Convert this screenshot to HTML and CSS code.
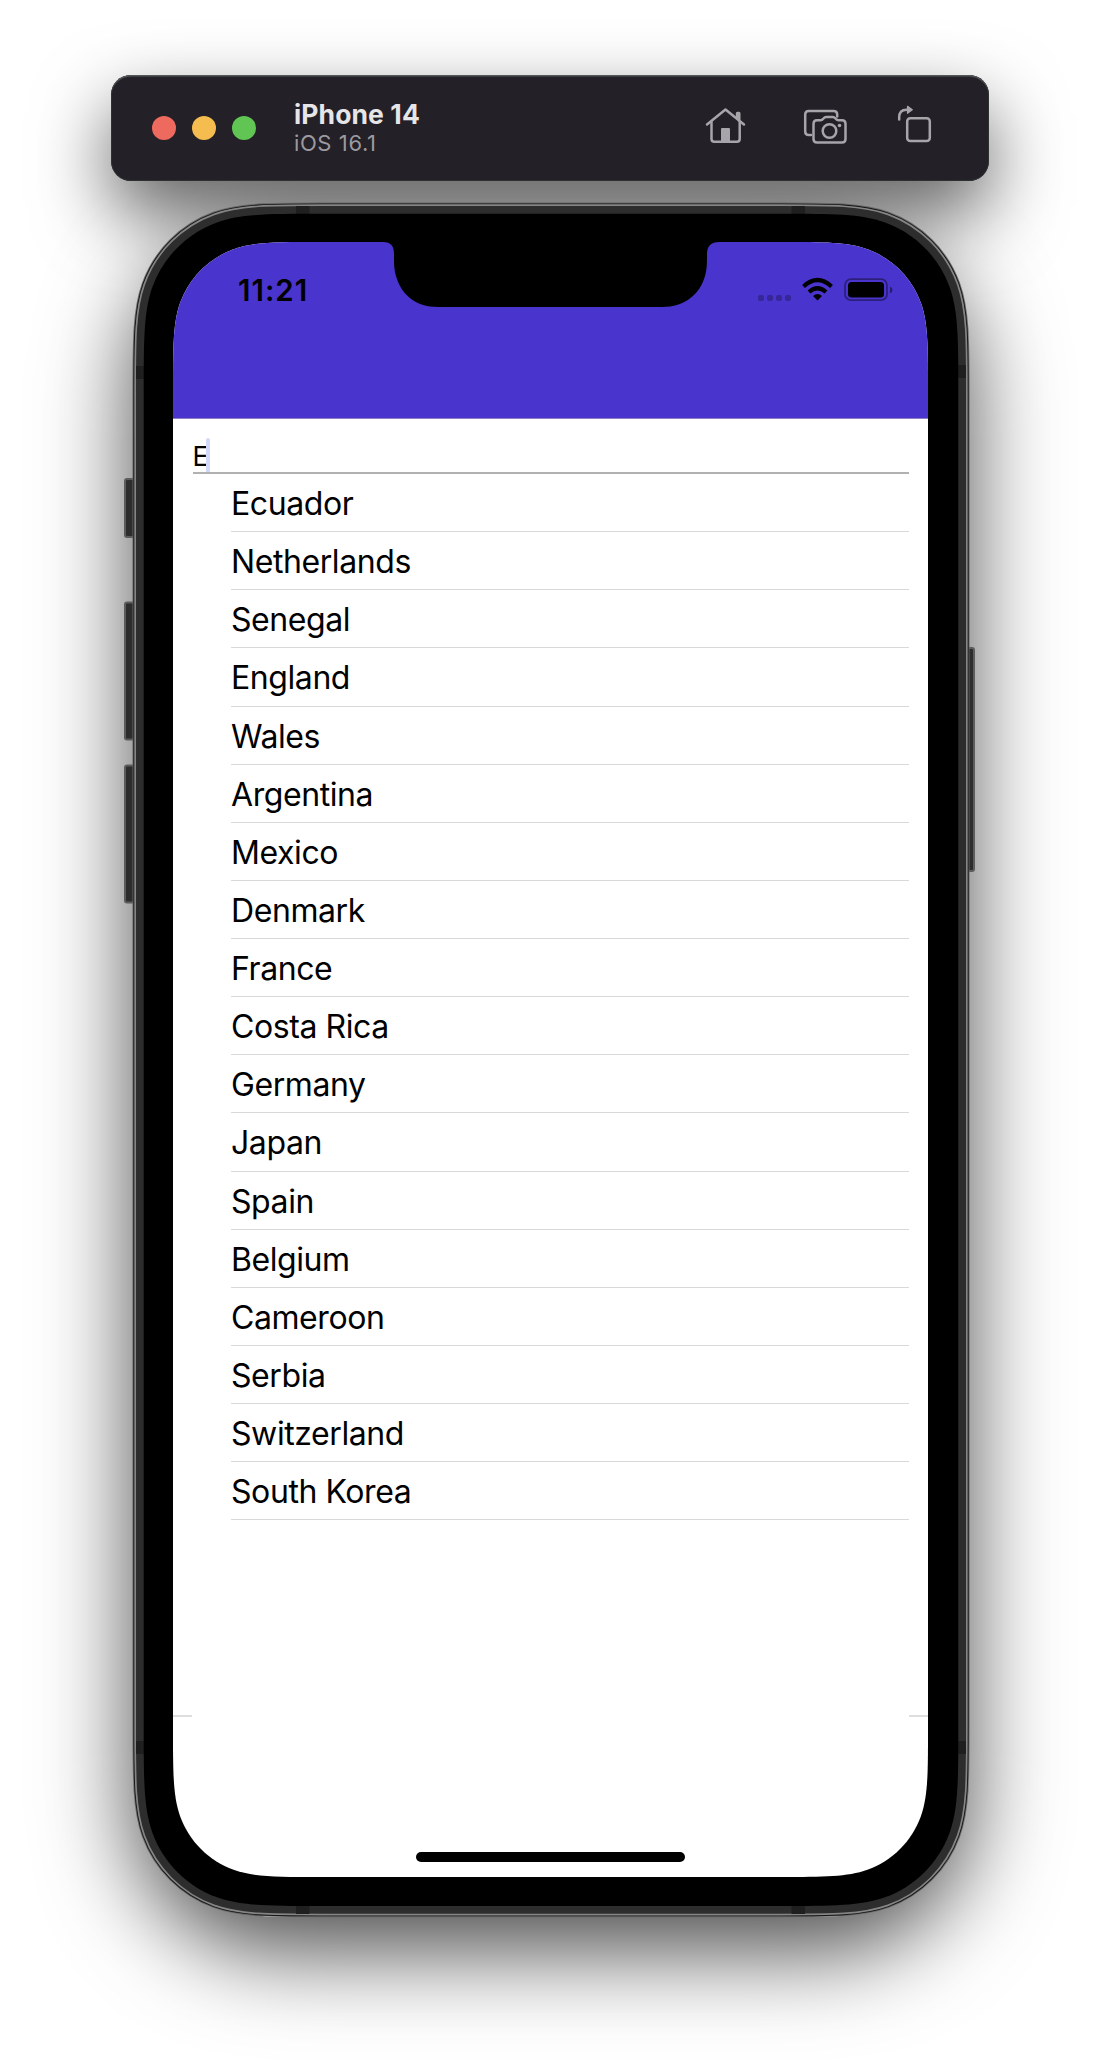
FILE: index.html
```html
<!DOCTYPE html>
<html lang="en">
<head>
<meta charset="utf-8">
<title>iPhone 14</title>
<link rel="stylesheet" href="styles.css">
</head>
<body>
<header class="toolbar">
  <div class="lights"><i class="red"></i><i class="yellow"></i><i class="green"></i></div>
  <div class="device">
    <h1>iPhone 14</h1>
    <p>iOS 16.1</p>
  </div>
  <svg class="tools" width="230" height="44" viewBox="704 102 230 44" fill="none" stroke="#a7a4aa" stroke-width="2.500" stroke-linecap="round" stroke-linejoin="round">
    <path d="M707 124.500L725.500 109.500L744 124.500"/>
    <path d="M711.500 122V139Q711.500 141.700 714.300 141.700H737Q739.700 141.700 739.700 139V122"/>
    <path d="M737.300 118V113.300H739V120" stroke-width="3"/>
    <path d="M721 129Q721 128 722 128H729Q730 128 730 129V142H721Z" fill="#a7a4aa" stroke="none"/>
    <path d="M811 135H808.800Q805.200 135 805.200 131.500V114.500Q805.200 111 808.800 111H833.600Q837.200 111 837.200 114.500V116.500"/>
    <path d="M813.500 124Q813.500 120.300 817 120.300H820.500Q822 120.300 823 119L823.700 118.200Q824.700 117 826.200 117H832.800Q834.300 117 835.300 118.200L836 119Q837 120.300 838.500 120.300H842Q845.500 120.300 845.500 124V139Q845.500 142.500 842 142.500H817Q813.500 142.500 813.500 139Z"/>
    <circle cx="829.500" cy="131" r="6.800"/>
    <circle cx="839.500" cy="125.500" r="1.800" fill="#a7a4aa" stroke="none"/>
    <rect x="907.200" y="118.200" width="22.600" height="22.800" rx="3"/>
    <path d="M899.200 119.500V117.500Q899.200 109.800 906.500 109.800H908"/>
    <path d="M907.500 106.300V113.300L912.300 109.800Z" fill="#a7a4aa" stroke-width="1.200"/>
  </svg>
</header>
<main class="phone">
  <svg class="chassis" width="1100" height="2068" viewBox="0 0 1100 2068">
    <defs>
      <path id="body" d="M321 213.700H781C832 213.700 860.900 213.700 885 222.400C915.100 233.300 938.700 256.900 949.600 287C958.300 311.100 958.300 340 958.300 391V1728.700C958.300 1779.700 958.300 1808.600 949.600 1832.700C938.700 1862.800 915.100 1886.400 885 1897.300C860.900 1906 832 1906 781 1906H321C270 1906 241.100 1906 217 1897.300C186.900 1886.400 163.300 1862.800 152.400 1832.700C143.700 1808.600 143.700 1779.700 143.700 1728.700V391C143.700 340 143.700 311.100 152.400 287C163.300 256.900 186.900 233.300 217 222.400C241.100 213.700 270 213.700 321 213.700Z"/>
    </defs>
    <g fill="#2d2d2d" stroke="#5c5c5c" stroke-width="2">
      <rect x="125" y="479" width="12" height="58" rx="2"/>
      <rect x="125" y="602.500" width="12" height="137" rx="2"/>
      <rect x="125" y="765.500" width="12" height="137" rx="2"/>
      <rect x="965" y="648" width="9" height="223" rx="2"/>
    </g>
    <use href="#body" stroke="#666" stroke-width="22.400"/>
    <use href="#body" stroke="#151515" stroke-width="20.600"/>
    <use href="#body" stroke="#858585" stroke-width="18.800"/>
    <use href="#body" stroke="#2d2d2d" stroke-width="15.400"/>
    <g fill="#1f1f1f">
      <rect x="296" y="206" width="13.500" height="8"/>
      <rect x="791.500" y="206" width="13.500" height="8"/>
      <rect x="296" y="1906" width="13.500" height="8"/>
      <rect x="791.500" y="1906" width="13.500" height="8"/>
      <rect x="136" y="366" width="8" height="13"/>
      <rect x="958" y="365" width="8" height="13"/>
      <rect x="136" y="1741" width="8" height="13"/>
      <rect x="958" y="1741" width="8" height="13"/>
    </g>
    <use href="#body"/>
  </svg>
  <div class="screen">
    <div class="navbar">
      <svg class="notch" width="336" height="65" viewBox="0 0 336 65"><path d="M0 0C8 0 11 4 11 12C11 22 11 27 13 34C18 52 32 65 55 65H279C302 65 317 52 322 34C324 27 324 22 324 12C324 4 328 0 336 0Z"/></svg>
      <time>11:21</time>
      <svg class="status" width="136" height="26" viewBox="757 276 136 26">
        <g opacity=".25"><rect x="758" y="295" width="6" height="6" rx="2"/><rect x="767" y="295" width="6" height="6" rx="2"/><rect x="776" y="295" width="6" height="6" rx="2"/><rect x="785" y="295" width="6" height="6" rx="2"/></g>
        <path d="M817.500 300.500L813 296Q817.500 292 822 296Z"/>
        <g fill="none" stroke="#000" stroke-width="4.200"><path d="M803.500 286.500Q817.500 273.500 831.500 286.500"/><path d="M809 292Q817.500 284.500 826 292"/></g>
        <rect x="845" y="279.200" width="42" height="21" rx="6" fill="none" stroke="#000" stroke-opacity=".4" stroke-width="1.800"/>
        <rect x="848" y="282" width="36" height="15.600" rx="3.500"/>
        <path d="M890 286.500Q892.500 287.500 892.500 290Q892.500 292.500 890 293.500Z" opacity=".45"/>
      </svg>
    </div>
    <div class="content">
      <div class="entry"><span>E</span><i class="caret"></i></div>
      <ul class="teams">
        <li>Ecuador</li><li>Netherlands</li><li>Senegal</li><li>England</li><li>Wales</li><li>Argentina</li><li>Mexico</li><li>Denmark</li><li>France</li><li>Costa Rica</li><li>Germany</li><li>Japan</li><li>Spain</li><li>Belgium</li><li>Cameroon</li><li>Serbia</li><li>Switzerland</li><li>South Korea</li>
      </ul>
    </div>
    <div class="tabline"><i></i><i></i></div>
    <div class="home"></div>
  </div>
</main>
</body>
</html>
```
FILE: styles.css
```css
* { box-sizing: border-box; margin: 0; padding: 0; }
body {
  width: 1100px;
  height: 2068px;
  padding-top: 75px;
  overflow: hidden;
  background: #fff;
  font-family: Inter, "Liberation Sans", sans-serif;
  color: #000;
}
.toolbar {
  position: relative;
  display: flex;
  align-items: center;
  width: 878px;
  height: 106px;
  margin-left: 111px;
  padding: 0 55px 0 41px;
  border-radius: 20px;
  background: #232027;
  box-shadow: inset 0 2px 1px -0.5px #555a5a, inset 0 0 0 1px #2d3031;
}
.toolbar::before {
  content: "";
  position: absolute;
  z-index: -1;
  inset: 0;
  border-radius: 20px;
  box-shadow: 0 32px 74px rgba(0, 0, 0, .62);
}
.lights { display: flex; gap: 16px; }
.lights i { width: 24px; height: 24px; border-radius: 50%; }
.red { background: #ee6a5f; }
.yellow { background: #f5bd4f; }
.green { background: #61c554; }
.device { margin-left: 38px; padding-bottom: 1px; }
.device h1 { font-size: 26.5px; line-height: 32px; font-weight: 700; letter-spacing: .1px; color: #e6e5e7; }
.device p { font-size: 22px; line-height: 27px; letter-spacing: .6px; color: #9c99a0; }
.tools { margin: 0 0 8px auto; }
.phone {
  width: 836px;
  height: 1714px;
  margin: 22px 0 0 133px;
  padding: 39px 0 0 40px;
  border-radius: 145px;
  box-shadow: 0 34px 92px rgba(0, 0, 0, .7);
}
.chassis { position: absolute; left: 0; top: 0; }
.screen {
  position: relative;
  display: flex;
  flex-direction: column;
  width: 755px;
  height: 1635px;
  background: #fff;
  clip-path: path("M146.800 0H608.200C650.500 0 674.400 0 694.400 7.200C719.200 16.200 738.800 35.800 747.800 60.600C755 80.600 755 104.500 755 146.800V1488.200C755 1530.500 755 1554.400 747.800 1574.400C738.800 1599.200 719.200 1618.800 694.400 1627.800C674.400 1635 650.500 1635 608.200 1635H146.800C104.500 1635 80.600 1635 60.600 1627.800C35.800 1618.800 16.200 1599.200 7.200 1574.400C0 1554.400 0 1530.500 0 1488.200V146.800C0 104.500 0 80.600 7.200 60.600C16.200 35.800 35.800 16.200 60.600 7.200C80.600 0 104.500 0 146.800 0Z");
}
.navbar {
  display: flex;
  justify-content: space-between;
  height: 177px;
  padding: 34px 35px 0 65px;
  background: #4934cd;
  border-bottom: 1px solid #8b80c8;
}
.notch { position: absolute; left: 210px; top: 0; }
.navbar time { font-size: 29.5px; line-height: 29px; font-weight: 600; letter-spacing: 1px; }
.content { padding: 18px 19.500px 0; }
.entry {
  display: flex;
  height: 37px;
  border-bottom: 2px solid #b1b1b1;
}
.entry span { font-size: 26.5px; line-height: 38px; }
.caret { width: 4px; height: 34px; margin: 1px 0 0 -2px; border-radius: 2px 2px 0 0; background: #d3d9f8; }
.teams { list-style: none; padding-left: 38.500px; }
.teams li {
  height: 58.130px;
  border-bottom: 1px solid #d9d9d9;
  font-size: 32px;
  line-height: 60px;
  letter-spacing: -.42px;
}
.tabline { display: flex; justify-content: space-between; margin-top: 195px; }
.tabline i { width: 19px; height: 2px; background: #dedede; }
.home { width: 269px; height: 10px; margin: auto auto 15.500px 243px; border-radius: 5px; background: #000; }
```
